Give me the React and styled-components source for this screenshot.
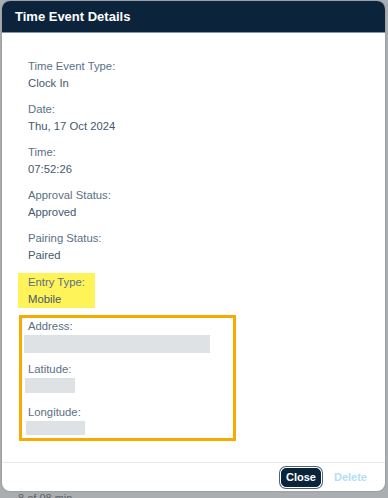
import React from "react";
import styled, { createGlobalStyle } from "styled-components";

const Global = createGlobalStyle`
  html, body { margin: 0; padding: 0; }
  body { font-family: "Liberation Sans", Arial, sans-serif; background: #abaeb1; }
`;

const Page = styled.div`
  width: 388px;
  height: 498px;
  overflow: hidden;
  background: #abaeb1;
  padding: 1px 3px 0 2px;
  box-sizing: border-box;
  display: flex;
  flex-direction: column;
`;

const Dialog = styled.div`
  height: 490px;
  flex: none;
  background: #fff;
  border-radius: 8px;
  overflow: hidden;
  display: flex;
  flex-direction: column;
  box-shadow: 0 0 2px rgba(0, 0, 0, 0.25);
`;

const Header = styled.div`
  height: 31px;
  flex: none;
  background: #0b243c;
  border-bottom: 1px solid #8795a3;
  display: flex;
  align-items: center;
  padding: 0 13px;
  color: #fff;
  font-weight: bold;
  font-size: 13px;
`;

const Content = styled.div`
  flex: 1;
  padding: 25px 0 0 16px;
  display: flex;
  flex-direction: column;
  gap: 9px;
`;

const Field = styled.div`
  display: flex;
  flex-direction: column;
  padding: ${(p) => (p.$highlight ? "1px 10px 0" : "0 10px")};
  margin-top: ${(p) => (p.$highlight ? "0" : "0")};
  align-self: flex-start;
  background: ${(p) => (p.$highlight ? "#fff35a" : "transparent")};
  height: ${(p) => (p.$highlight ? "34px" : "auto")};
`;

const Label = styled.div`
  font-size: 11.3px;
  line-height: 17px;
  color: #5b6f84;
  white-space: nowrap;
`;

const Value = styled.div`
  font-size: 11.3px;
  line-height: 17px;
  color: #46596d;
  white-space: nowrap;
`;

const LocationBox = styled.div`
  margin-top: -2px;
  width: 217px;
  height: 126px;
  box-sizing: border-box;
  border: 3px solid #f7ab00;
  margin-left: 1px;
  padding: 1px 0 0 2px;
  display: flex;
  flex-direction: column;
`;

const LocLabel = styled.div`
  font-size: 11.3px;
  line-height: 15px;
  color: #5b6f84;
  padding-left: 4px;
  margin-top: ${(p) => p.$top || 0}px;
`;

const Redacted = styled.div`
  background: #dfe2e5;
  height: ${(p) => p.$h}px;
  width: ${(p) => p.$w}px;
  margin-top: 1px;
  margin-left: ${(p) => p.$l || 0}px;
`;

const Footer = styled.div`
  flex: none;
  height: 28px;
  border-top: 1px solid #e8eaec;
  display: flex;
  align-items: center;
  justify-content: flex-end;
  gap: 13px;
  padding: 0 18px 0 0;
`;

const CloseButton = styled.button`
  font-family: inherit;
  font-size: 11px;
  font-weight: bold;
  color: #fff;
  background: #0b243c;
  border: 1px solid #0b243c;
  border-radius: 5px;
  height: 19px;
  padding: 0 4px;
  box-shadow: 0 0 0 1px #fff, 0 0 0 2px #4d6377;
  cursor: pointer;
`;

const DeleteButton = styled.span`
  font-size: 11px;
  font-weight: bold;
  color: #b2def6;
`;

const BehindText = styled.div`
  margin: 1px 0 0 16px;
  font-size: 11px;
  line-height: 12px;
  color: #5b6168;
`;

export default function App() {
  const fields = [
    ["Time Event Type:", "Clock In"],
    ["Date:", "Thu, 17 Oct 2024"],
    ["Time:", "07:52:26"],
    ["Approval Status:", "Approved"],
    ["Pairing Status:", "Paired"],
  ];
  return (
    <>
      <Global />
      <Page>
        <Dialog>
          <Header>Time Event Details</Header>
          <Content>
            {fields.map(([l, v]) => (
              <Field key={l}>
                <Label>{l}</Label>
                <Value>{v}</Value>
              </Field>
            ))}
            <Field $highlight>
              <Label>Entry Type:</Label>
              <Value>Mobile</Value>
            </Field>
            <LocationBox>
              <LocLabel>Address:</LocLabel>
              <Redacted $w={186} $h={18} />
              <LocLabel $top={9}>Latitude:</LocLabel>
              <Redacted $w={50} $h={15} $l={1} />
              <LocLabel $top={12}>Longitude:</LocLabel>
              <Redacted $w={59} $h={14} $l={2} />
            </LocationBox>
          </Content>
          <Footer>
            <CloseButton>Close</CloseButton>
            <DeleteButton>Delete</DeleteButton>
          </Footer>
        </Dialog>
        <BehindText>8 of 08 min</BehindText>
      </Page>
    </>
  );
}
